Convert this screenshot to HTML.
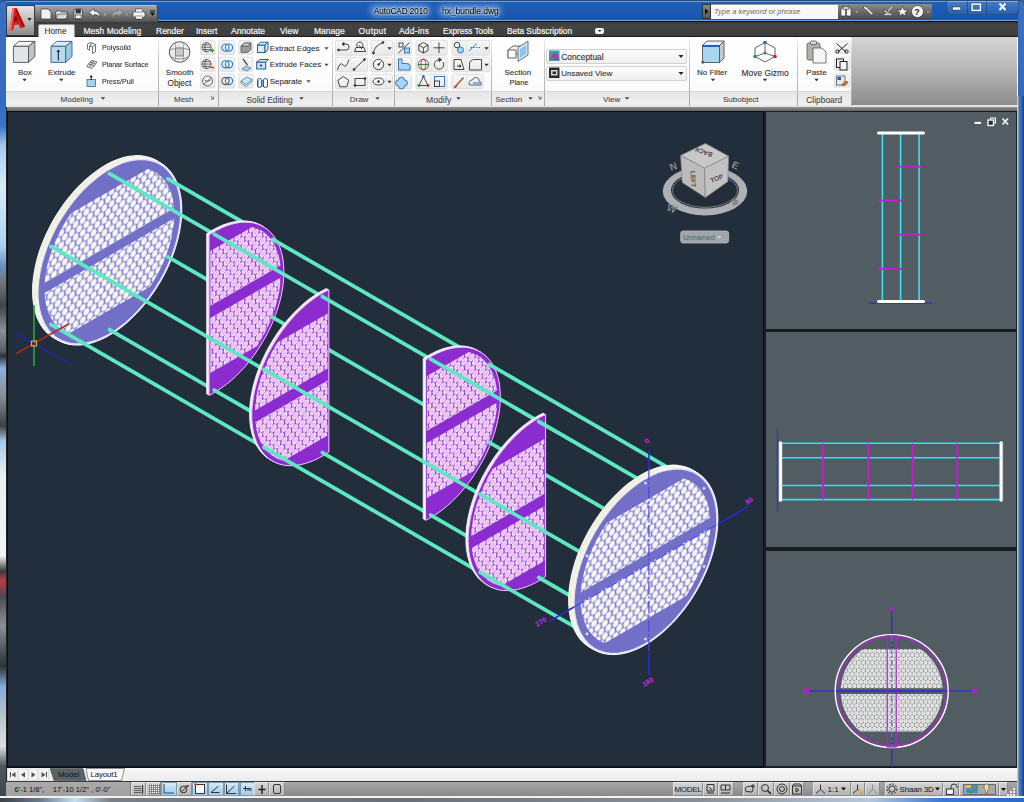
<!DOCTYPE html><html><head><meta charset="utf-8"><style>*{margin:0;padding:0;box-sizing:border-box}
html,body{width:1024px;height:802px;overflow:hidden;background:#2a5aa8;font-family:"Liberation Sans",sans-serif}
.a{position:absolute}
#frame{left:0;top:0;width:1024px;height:802px;background:linear-gradient(180deg,#2a4a78 0px,#2a4a78 1px,#3a6ec0 2px,#2c64b8 30%,#2a5fae 100%);border-radius:6px 6px 0 0}
#titlebar{left:6px;top:1px;width:1012px;height:21px;background:linear-gradient(180deg,#6aa0e0 0px,#6aa0e0 1px,#1e60b8 1px,#1a5ab2 10px,#1856aa 19.5px,#6aa8e8 19.5px,#6aa8e8 20.5px,#0a0a0a 20.5px)}
#tabbar{left:6px;top:22px;width:1012px;height:15px;background:linear-gradient(180deg,#3a3a3a 0%,#444444 30%,#3c3c3c 100%);border-bottom:1px solid #1a1a1a}
#ribbon{left:6px;top:37px;width:1012px;height:69px;background:linear-gradient(180deg,#ffffff 0%,#fcfcfc 60%,#f6f6f6 100%)}
#ribbonshadow{left:6px;top:106px;width:1012px;height:6px;background:linear-gradient(180deg,#a0a0a0 0%,#7a7a7a 50%,#5a5a5a 100%)}
#vpmain{left:7px;top:111px;width:757px;height:657px;background:#232e3c;border:1px solid #0c0f14;border-width:1px 1px 2px 1px}
#vpr1{left:764px;top:111px;width:253px;height:221px;background:#515d62;border:1px solid #1a1e22;border-width:1px 1px 3px 2px}
#vpr2{left:764px;top:329px;width:253px;height:221px;background:#515d62;border:1px solid #1a1e22;border-width:3px 1px 3px 2px}
#vpr3{left:764px;top:548px;width:253px;height:220px;background:#515d62;border:1px solid #1a1e22;border-width:3px 1px 2px 2px}
#layoutrow{left:6px;top:768px;width:1012px;height:13px;background:linear-gradient(180deg,#ffffff 0%,#f6f6f6 15%,#ececec 100%)}
#statusbar{left:6px;top:781px;width:1012px;height:16px;background:linear-gradient(180deg,#a9a9a9 0%,#979797 50%,#878787 100%);border-top:1px solid #3a3a3a}
#bottomframe{left:0;top:796px;width:1024px;height:6px;background:linear-gradient(180deg,#f2f2f2 0px,#f2f2f2 1.5px,transparent 1.5px),linear-gradient(90deg,#3a4048 0px,#6a7a90 40px,#c8e0f4 75px,#7a8088 110px,#6a7078 400px,#8a9098 700px,#b8c8dc 870px,#3a7ad4 940px,#2a6ac8 1024px)}
#leftframe{left:0;top:96px;width:7px;height:706px;background:linear-gradient(180deg,#2f6ac0 0px,#3a74c8 30px,#a8c8ec 50px,#d8ecf8 90px,#b0d0f0 150px,#6a90c0 170px,#707880 185px,#40464c 210px,#8a9098 235px,#5a6068 255px,#2a3038 260px,#90b0d8 272px,#8a9098 300px,#3a4048 330px,#a8c8e8 345px,#e8f0f4 380px,#f0f4f4 460px,#3a3a40 475px,#c03a44 485px,#4a4a50 500px,#8a9098 530px,#2a3038 570px,#88a8d8 590px,#b8c4cc 620px,#d8e0e4 650px,#505860 670px,#3a4048 706px);border-right:1px solid #222}
#rightframe{left:1017px;top:96px;width:7px;height:706px;background:linear-gradient(90deg,#d8e4f0 0%,#4a7ac0 30%,#2f62b0 70%,#1a3a70 100%)}
.tab{top:26.2px;font-size:8.5px;color:#f4f4f4;white-space:nowrap;-webkit-text-stroke:0.2px #f4f4f4}
.rt{font-size:8px;color:#303030;white-space:nowrap;position:absolute;-webkit-text-stroke:0.1px #303030}
.pt{font-size:8px;color:#444;white-space:nowrap;position:absolute;top:94.5px;-webkit-text-stroke:0.08px #444}
.sep{position:absolute;top:38px;width:1px;height:68px;background:linear-gradient(180deg,#f0f0f0 0%,#c8c8c8 30%,#a8a8a8 100%)}
.sb{position:absolute;top:782px;height:14px;background:linear-gradient(180deg,#d4d4d4 0%,#c4c4c4 50%,#b4b4b4 100%);border:1px solid #8a8a8a;border-top-color:#e8e8e8;border-left-color:#e0e0e0}
.sba{position:absolute;top:782px;height:14px;background:linear-gradient(180deg,#d8ecf8 0%,#b8d8ee 50%,#a4cce8 100%);border:1px solid #7a9ab0}
.st{position:absolute;font-size:8px;color:#111;white-space:nowrap}
</style></head><body>
<div id="frame" class="a"></div>
<div id="titlebar" class="a"></div>
<div id="tabbar" class="a"></div>
<div id="ribbon" class="a"></div>
<div id="ribbonshadow" class="a"></div>
<div id="vpmain" class="a"></div>
<div id="vpr1" class="a"></div>
<div id="vpr2" class="a"></div>
<div id="vpr3" class="a"></div>
<div id="layoutrow" class="a"></div>
<div id="statusbar" class="a"></div>
<div id="leftframe" class="a"></div>
<div id="rightframe" class="a"></div>
<div id="bottomframe" class="a"></div>
<div class="a" style="left:6px;top:5px;width:29px;height:31px;background:linear-gradient(180deg,#e4e4e4 0%,#b8b8b8 55%,#8a8a8a 100%);border:1px solid #3a3a3a;border-radius:2px"></div>
<svg class="a" style="left:0;top:0" width="40" height="40" viewBox="0 0 40 40">
<polygon points="12.5,8 16.5,8 25,26.5 20.5,28.5 18.5,24.5 14.5,25 13,30 9.5,30.5" fill="#d81c1c"/>
<polygon points="12.5,8 14.5,8 11.5,29.5 9.5,30.5" fill="#f47070"/>
<polygon points="16.5,8 25,26.5 23,27.5 15.5,11" fill="#a01010"/>
<polygon points="14.5,17 16.5,15.5 18,21 14,21.5" fill="#8a0c0c"/>
<polygon points="27.5,18 31.5,18 29.5,21" fill="#1a1a1a"/>
</svg>
<div class="a" style="left:35px;top:5px;width:123px;height:17px;background:linear-gradient(180deg,#a4a4a4 0%,#8a8a8a 35%,#6a6a6a 70%,#505050 100%);border-radius:0 3px 0 0;border-top:1px solid #c0c0c0;border-right:1px solid #444"></div>
<svg class="a" style="left:35px;top:5px" width="123" height="17" viewBox="35 5 123 17">
<g fill="#f0f0f0" stroke="#222" stroke-width="0.6">
<polygon points="41,9 48,9 51,12 51,19 41,19"/>
<polygon points="56,11 60,11 61,12 67,12 67,19 56,19"/>
<polygon points="58,14 68,14 66,19 56,19" fill="#d8d8d8"/>
<rect x="74" y="9" width="8.5" height="10" rx="1" fill="#d8d8d8"/>
<rect x="76" y="9.5" width="4.5" height="3.5" fill="#333"/>
<rect x="75.5" y="15" width="5.5" height="3.5" fill="#fff"/>
</g>
<path d="M89,12.5 L94,8.5 L94,11 Q100,11 100,17.5 Q98,14 94,14.5 L94,16.5 Z" fill="#f4f4f4" stroke="#222" stroke-width="0.6"/>
<circle cx="105" cy="14.5" r="0.9" fill="#bbb"/>
<path d="M123,12.5 L118,8.5 L118,11 Q112,11 112,17.5 Q114,14 118,14.5 L118,16.5 Z" fill="#a8a8a8" stroke="#666" stroke-width="0.5"/>
<circle cx="127" cy="14.5" r="0.9" fill="#aaa"/>
<rect x="133" y="11.5" width="12" height="6" rx="2" fill="#f4f4f4" stroke="#222" stroke-width="0.6"/>
<rect x="135.5" y="9" width="7" height="3" fill="#f4f4f4" stroke="#222" stroke-width="0.5"/>
<rect x="135.5" y="16" width="7" height="3" fill="#fff" stroke="#222" stroke-width="0.5"/>
<polygon points="150,12.5 155,12.5 152.5,16" fill="#111"/>
<rect x="150" y="10.5" width="5" height="1" fill="#111"/>
</svg>
<div class="a" style="left:370px;top:6px;width:60px;height:10px;background:rgba(190,220,255,0.55);filter:blur(3px);border-radius:5px"></div><div class="a" style="left:439px;top:6px;width:62px;height:10px;background:rgba(190,220,255,0.55);filter:blur(3px);border-radius:5px"></div>
<div class="a" style="left:373.5px;top:6.1px;font-size:8.6px;color:#000;white-space:nowrap;transform:scaleX(0.935);transform-origin:0 0;-webkit-text-stroke:0.15px #000;text-shadow:0 0 1px #fff,0 0 2px #e8f4ff,0 0 3px #d8ecff">AutoCAD 2010</div>
<div class="a" style="left:442px;top:6.1px;font-size:8.6px;color:#000;white-space:nowrap;transform:scaleX(0.98);transform-origin:0 0;-webkit-text-stroke:0.15px #000;text-shadow:0 0 1px #fff,0 0 2px #e8f4ff,0 0 3px #d8ecff">hx_bundle.dwg</div>
<div class="a" style="left:702px;top:4px;width:9px;height:15px;background:linear-gradient(180deg,#888 0%,#555 100%);border:1px solid #333"></div>
<svg class="a" style="left:702px;top:4px" width="9" height="15"><polygon points="3,4.5 6.5,7.5 3,10.5" fill="#111"/></svg>
<div class="a" style="left:711px;top:4px;width:127px;height:15px;background:#f8f8f8;border-top:1px solid #999"></div>
<div class="a" style="left:714px;top:7px;font-size:7.5px;font-style:italic;color:#6a6a6a;white-space:nowrap">Type a keyword or phrase</div>
<div class="a" style="left:838px;top:4px;width:94px;height:15px;background:linear-gradient(180deg,#8c8c8c 0%,#6a6a6a 50%,#4c4c4c 100%);border-radius:0 0 3px 0"></div>
<svg class="a" style="left:838px;top:4px" width="94" height="15" viewBox="838 4 94 15">
<g fill="#f4f4f4" stroke="#222" stroke-width="0.5">
<rect x="841" y="8" width="4.5" height="8" rx="1.5"/><rect x="846.5" y="8" width="4.5" height="8" rx="1.5"/>
<rect x="843" y="6.5" width="6" height="3" fill="#ccc"/>
</g>
<circle cx="857" cy="12" r="0.8" fill="#ccc"/>
<path d="M863,7 Q866,5.5 867.5,8 L873,13.5 L871.5,15 L866,9.5 Q863.5,10.5 862.5,8 L864.5,8.5 Z" fill="#f4f4f4" stroke="#222" stroke-width="0.5"/>
<path d="M883,15.5 L893,15.5 L888,11 Z M884,9 Q884,14.5 890,14 Z" fill="#f4f4f4" stroke="#222" stroke-width="0.5"/>
<line x1="888" y1="11" x2="892" y2="7" stroke="#f4f4f4" stroke-width="1"/>
<polygon points="902.5,6 904,10 908,10 905,12.5 906,16 902.5,14 899,16 900,12.5 897,10 901,10" fill="#f4f4f4" stroke="#222" stroke-width="0.5"/>
<circle cx="917.5" cy="11.5" r="6" fill="#f4f4f4" stroke="#222" stroke-width="0.6"/>
<text x="914.3" y="15" font-family="Liberation Sans" font-weight="bold" font-size="9" fill="#222">?</text>
<circle cx="928" cy="12" r="0.8" fill="#ccc"/>
</svg>
<div class="a" style="left:946px;top:1px;width:73px;height:14px;border:1px solid rgba(20,40,80,0.5);border-top:none;border-radius:0 0 4px 4px;background:linear-gradient(180deg,rgba(255,255,255,0.18) 0%,rgba(255,255,255,0.05) 100%)"></div>
<div class="a" style="left:967px;top:1px;width:1px;height:13px;background:rgba(20,40,80,0.4)"></div>
<div class="a" style="left:986px;top:1px;width:1px;height:13px;background:rgba(20,40,80,0.4)"></div>
<svg class="a" style="left:946px;top:0" width="73" height="16" viewBox="946 0 73 16">
<rect x="952.5" y="7" width="8" height="3" fill="#fff" stroke="#333" stroke-width="0.5"/>
<rect x="972" y="4" width="8.5" height="6.5" fill="none" stroke="#fff" stroke-width="1.6"/>
<rect x="971" y="3" width="10.5" height="8.5" fill="none" stroke="#333" stroke-width="0.4"/>
<g stroke="#fff" stroke-width="1.9"><line x1="999.5" y1="3.5" x2="1005.5" y2="10"/><line x1="1005.5" y1="3.5" x2="999.5" y2="10"/></g>
</svg>
<div class="a" style="left:38px;top:24px;width:37px;height:13px;background:linear-gradient(180deg,#f0f0f0 0%,#fafafa 100%);border:1px solid #999;border-bottom:none;border-radius:2px 2px 0 0"></div>
<div class="a" style="left:44.5px;top:26.2px;font-size:8.3px;color:#2a2a2a;white-space:nowrap">Home</div>
<div class="a tab" style="left:83.5px">Mesh Modeling</div>
<div class="a tab" style="left:156px">Render</div>
<div class="a tab" style="left:196px">Insert</div>
<div class="a tab" style="left:231px">Annotate</div>
<div class="a tab" style="left:280px">View</div>
<div class="a tab" style="left:314px">Manage</div>
<div class="a tab" style="left:358.5px;letter-spacing:0.4px">Output</div>
<div class="a tab" style="left:399px;letter-spacing:0.2px">Add-ins</div>
<div class="a tab" style="left:443px;font-size:8.15px;top:26.5px">Express Tools</div>
<div class="a tab" style="left:507px;font-size:8.3px;top:26.3px">Beta Subscription</div>
<div class="a" style="left:594.5px;top:28px;width:9.5px;height:5.5px;background:#f4f4f4;border-radius:2px"></div>
<svg class="a" style="left:594.5px;top:28px" width="10" height="6"><polygon points="3,2 6.5,2 4.75,4" fill="#222"/></svg>
<div class="a" style="left:6px;top:91px;width:845px;height:15px;background:linear-gradient(180deg,#e6e6e6 0%,#ececec 50%,#f2f2f2 100%);border-top:1px solid #d8d8d8"></div>
<div class="a" style="left:851px;top:37px;width:166px;height:68px;background:linear-gradient(180deg,#d4d4d4 0%,#bcbcbc 40%,#8c8c8c 100%);border-left:1px solid #c8c8c8"></div>
<div class="a" style="left:6px;top:105px;width:1012px;height:2px;background:#e6e6e6"></div>
<div class="sep" style="left:158px"></div>
<div class="sep" style="left:217.5px"></div>
<div class="sep" style="left:331.5px"></div>
<div class="sep" style="left:394px"></div>
<div class="sep" style="left:491px"></div>
<div class="sep" style="left:543.5px"></div>
<div class="sep" style="left:688.5px"></div>
<div class="sep" style="left:796.5px"></div>
<div class="sep" style="left:851px"></div>
<!-- Modeling -->
<div class="rt" style="left:18px;top:67.5px">Box</div>
<div class="rt" style="left:48px;top:67.5px">Extrude</div>
<div class="rt" style="left:101.6px;top:43.3px;transform:scaleX(0.9);transform-origin:0 0">Polysolid</div>
<div class="rt" style="left:101.6px;top:60.3px;transform:scaleX(0.88);transform-origin:0 0">Planar Surface</div>
<div class="rt" style="left:101.6px;top:76.8px;transform:scaleX(0.88);transform-origin:0 0">Press/Pull</div>
<div class="pt" style="left:60.6px">Modeling</div>
<!-- Mesh -->
<div class="rt" style="left:165.8px;top:67.8px">Smooth</div>
<div class="rt" style="left:167.6px;top:78.6px;font-size:8.2px">Object</div>
<div class="pt" style="left:174px">Mesh</div>
<!-- Solid editing -->
<div class="rt" style="left:269.7px;top:44px">Extract Edges</div>
<div class="rt" style="left:269.7px;top:60.3px">Extrude Faces</div>
<div class="rt" style="left:269.7px;top:76.8px">Separate</div>
<div class="pt" style="left:246.5px;font-size:8.3px">Solid Editing</div>
<!-- Draw / Modify -->
<div class="pt" style="left:349.7px">Draw</div>
<div class="pt" style="left:426px;font-size:8.6px">Modify</div>
<!-- Section -->
<div class="rt" style="left:504.5px;top:67.5px">Section</div>
<div class="rt" style="left:509.5px;top:78.3px;font-size:7.4px">Plane</div>
<div class="pt" style="left:495.5px">Section</div>
<!-- View -->
<div class="a" style="left:546px;top:48.5px;width:141px;height:15.5px;background:linear-gradient(180deg,#fdfdfd 0%,#eeeeee 100%);border:1px solid #d2d2d2;border-radius:2px"></div>
<div class="a" style="left:546px;top:65.5px;width:141px;height:15.5px;background:linear-gradient(180deg,#fdfdfd 0%,#eeeeee 100%);border:1px solid #d2d2d2;border-radius:2px"></div>
<div class="rt" style="left:561.2px;top:52px;font-size:8.4px">Conceptual</div>
<div class="rt" style="left:561.2px;top:68.8px">Unsaved View</div>
<div class="pt" style="left:603px">View</div>
<!-- Subobject -->
<div class="rt" style="left:697px;top:67.5px">No Filter</div>
<div class="rt" style="left:741.6px;top:67.8px;font-size:8.4px">Move Gizmo</div>
<div class="pt" style="left:723px">Subobject</div>
<!-- Clipboard -->
<div class="rt" style="left:806.3px;top:67.8px">Paste</div>
<div class="pt" style="left:806.3px;font-size:8.4px">Clipboard</div>
<svg class="a" style="left:0;top:0" width="1024" height="110" viewBox="0 0 1024 110">
<defs>
<linearGradient id="btnbg" x1="0" y1="0" x2="0" y2="1"><stop offset="0" stop-color="#f8f8f8"/><stop offset="1" stop-color="#e8e8e8"/></linearGradient>
</defs>
<!-- Box -->
<g stroke="#505050" stroke-width="0.9" stroke-linejoin="round">
<polygon points="13.4,46.3 18.7,41.4 34.9,41.4 28.5,46.3" fill="#f6f6f6"/>
<polygon points="28.5,46.3 34.9,41.4 34.9,56.5 28.5,62.4" fill="#c0c2c4"/>
<rect x="13.4" y="46.3" width="15.1" height="16.1" fill="#e2e4e6"/>
</g>
<polygon points="22.3,78.7 26.7,78.7 24.5,81.2" fill="#333"/>
<!-- Extrude -->
<g stroke="#3e5e7c" stroke-width="0.9" stroke-linejoin="round">
<polygon points="51,46.3 56.8,41.4 72,41.4 65.6,46.3" fill="#d8eefa"/>
<polygon points="65.6,46.3 72,41.4 72,56.5 65.6,62.4" fill="#9ccae6"/>
<rect x="51" y="46.3" width="14.6" height="16.1" fill="#b6dcf2"/>
</g>
<line x1="58.3" y1="60.5" x2="58.3" y2="51" stroke="#111" stroke-width="1"/>
<polygon points="56.5,52 58.3,49.5 60.1,52" fill="#111"/>
<polygon points="59.1,78.7 63.5,78.7 61.3,81.2" fill="#333"/>
<!-- Polysolid / Planar / PressPull -->
<g fill="none" stroke="#555" stroke-width="0.8">
<path d="M87.5,44 L91,42.6 L95.5,44.5 L95.5,52 L92.5,53.6 L92.5,47 L89.5,45.7 L89.5,50.5 L87.5,49 Z"/>
<path d="M91,42.6 L91,47 M92.5,47 L95.5,44.5"/>
<path d="M86.5,66.5 L91.5,60.2 L97,62 L92,68.5 Z" fill="#e8e8e8"/>
<path d="M88.5,64 L94,65.5 M90,62 L95.5,63.8 M89.5,67 L93.5,61"/>
</g>
<rect x="87" y="79.5" width="8.5" height="7" fill="#a8d4ee" stroke="#3e6a8c" stroke-width="0.8"/>
<line x1="91.2" y1="75.8" x2="91.2" y2="80" stroke="#111" stroke-width="1"/>
<circle cx="91.2" cy="76.5" r="1.1" fill="#111"/>
<!-- Smooth object sphere -->
<circle cx="179.6" cy="52" r="10.3" fill="#ececec" stroke="#555" stroke-width="1"/>
<path d="M169.6,50 Q179.6,46 189.6,50 M171,57 Q179.6,61 188.2,57" fill="none" stroke="#777" stroke-width="0.8"/>
<rect x="175.5" y="48" width="8" height="8" fill="#c8c8c8" stroke="#666" stroke-width="0.7"/>
<path d="M175.5,43 L175.5,62 M183.5,43 L183.5,62" stroke="#888" stroke-width="0.6"/>
<!-- small button backgrounds -->
<g fill="url(#btnbg)" stroke="#d6d6d6" stroke-width="0.7">
<rect x="200.5" y="40.6" width="14.5" height="14" rx="1.5"/><rect x="200.5" y="57.3" width="14.5" height="14" rx="1.5"/><rect x="200.5" y="74" width="14.5" height="14" rx="1.5"/>
<rect x="220" y="40.6" width="14.4" height="14" rx="1.5"/><rect x="220" y="57.3" width="14.4" height="14" rx="1.5"/><rect x="220" y="74" width="14.4" height="14" rx="1.5"/>
<rect x="238.7" y="40.6" width="14.3" height="14" rx="1.5"/><rect x="238.7" y="57.3" width="14.3" height="14" rx="1.5"/><rect x="238.7" y="74" width="14.3" height="14" rx="1.5"/>
<rect x="335.5" y="40.3" width="32" height="15" rx="1.5"/><rect x="371" y="40.3" width="21.5" height="15" rx="1.5"/>
<rect x="335.5" y="57.3" width="32" height="14.5" rx="1.5"/><rect x="371" y="57.3" width="21.5" height="14.5" rx="1.5"/>
<rect x="335.5" y="74.5" width="32" height="14.5" rx="1.5"/><rect x="371" y="74.5" width="21.5" height="14.5" rx="1.5"/>
<rect x="396.4" y="40.3" width="15" height="15" rx="1.5"/><rect x="416" y="40.3" width="31.2" height="15" rx="1.5"/><rect x="451.9" y="40.3" width="37.5" height="15" rx="1.5"/>
<rect x="396.4" y="57.3" width="15" height="14.5" rx="1.5"/><rect x="416" y="57.3" width="31.2" height="14.5" rx="1.5"/><rect x="451.9" y="57.3" width="37.5" height="14.5" rx="1.5"/>
<rect x="396.4" y="74.5" width="15" height="14.5" rx="1.5"/><rect x="416" y="74.5" width="31.2" height="14.5" rx="1.5"/><rect x="451.9" y="74.5" width="31.2" height="14.5" rx="1.5"/>
<rect x="834.4" y="41.2" width="15.5" height="12.6" rx="1.5"/><rect x="834.4" y="57.3" width="15.5" height="12.8" rx="1.5"/><rect x="834.4" y="74" width="15.5" height="13" rx="1.5"/>
</g>
<g stroke="#e2e2e2" stroke-width="0.7"><line x1="351" y1="41" x2="351" y2="89"/><line x1="386" y1="41" x2="386" y2="89"/><line x1="431" y1="41" x2="431" y2="89"/><line x1="466.7" y1="41" x2="466.7" y2="89"/><line x1="483.1" y1="41" x2="483.1" y2="72"/></g>
<!-- Mesh col icons -->
<g fill="none" stroke="#444" stroke-width="0.8">
<circle cx="206.5" cy="47.2" r="4.6"/><path d="M201.9,47.2 H211.1 M206.5,42.6 Q203,47.2 206.5,51.8 M202.5,44.8 H210.5 M202.5,49.6 H210.5"/>
<circle cx="206.5" cy="64" r="4.6"/><path d="M201.9,64 H211.1 M206.5,59.4 Q203,64 206.5,68.6 M202.5,61.6 H210.5 M202.5,66.4 H210.5"/>
<circle cx="207.5" cy="81" r="5"/><path d="M203.5,85 L211.5,77 M204.5,80 Q207.5,83 210.5,80"/>
</g>
<path d="M210.5,50.5 H214 M212.25,48.7 V52.3" stroke="#1a9a2a" stroke-width="1.4"/>
<path d="M210.5,67.5 H214" stroke="#c02020" stroke-width="1.4"/>
<!-- Solid editing col1 rings -->
<g fill="none" stroke="#2a7ac8" stroke-width="1.1">
<circle cx="225.5" cy="47.6" r="3.6"/><circle cx="229" cy="47.6" r="3.6"/>
<circle cx="225.5" cy="64.3" r="3.6"/><circle cx="229" cy="64.3" r="3.6"/>
<circle cx="225.5" cy="81" r="3.6" stroke="#555"/><circle cx="229" cy="81" r="3.6" stroke="#2a7ac8"/>
</g>
<!-- col2 -->
<g stroke="#444" stroke-width="0.7">
<polygon points="241,46 244.5,43 251,43 251,49.5 247.5,52.5 241,52.5" fill="#9a9a9a"/>
<polygon points="241,46 244.5,43 251,43 247.5,46" fill="#d0d0d0"/>
<path d="M242,69 L246,66 L251,68 L247,71 Z" fill="#a8d0ea" stroke="#3a6a8c"/>
<path d="M243,59 L247.5,65" stroke="#222" stroke-width="1.2"/>
<path d="M241,81 L247,77 L252,79.5 L246,84.5 Z" fill="#cde6f6" stroke="#3a6a8c"/>
<path d="M241,81 L241,83 L246,86.5 L252,81.5 L252,79.5" fill="none" stroke="#3a6a8c"/>
</g>
<!-- Extract edges / extrude faces / separate icons -->
<g stroke="#2060a8" stroke-width="1" fill="#dcecf8">
<rect x="257.5" y="45" width="7.5" height="7.5"/><path d="M257.5,45 L260.5,42.2 L268,42.2 L265,45 Z M265,45 L268,42.2 L268,49.8 L265,52.5 Z"/>
<rect x="256.7" y="62" width="9" height="7" fill="#c8e0f2"/><path d="M256.7,62 L259.5,59.5 L268.5,59.5 L265.7,62 Z"/>
<path d="M258,80 V87 M262,80 V87 M263.5,80 V87 M267.5,80 V87" fill="none"/>
<rect x="257.5" y="78.5" width="4" height="9" rx="1.8" fill="none"/><rect x="263.5" y="78.5" width="4" height="9" rx="1.8" fill="none"/>
</g>
<circle cx="261" cy="65.5" r="0.9" fill="#111"/>
<g fill="#555"><polygon points="324.3,47.2 328.7,47.2 326.5,49.7"/><polygon points="324.3,63.7 328.7,63.7 326.5,66.2"/><polygon points="306.3,80.2 310.7,80.2 308.5,82.7"/></g>
<!-- Draw icons -->
<g fill="none" stroke="#333" stroke-width="0.9">
<path d="M338.5,50 H346 Q349,50 349,47 Q349,44 346,44 H344"/><polygon points="344,42.5 342,44 344,45.5" fill="#333"/><circle cx="338.5" cy="50" r="0.9" fill="#333"/>
<path d="M354.5,51.5 L365.5,51.5 L364,47.5 L356,47.5 Z M357.5,47.5 Q355,42.5 360,42 Q364,42.5 362.5,47.5 M359,45 L362,49"/>
<path d="M373.5,53 Q374,46 383,42.5"/><circle cx="373.5" cy="53" r="0.9" fill="#333"/><circle cx="383" cy="42.5" r="0.9" fill="#333"/>
<path d="M337.5,70 Q340,61 343,65 Q346,69 349,59.5"/>
<path d="M354,69.5 L364.5,59.5"/><circle cx="354" cy="69.5" r="0.9" fill="#333"/><circle cx="364.5" cy="59.5" r="0.9" fill="#333"/>
<circle cx="378.5" cy="64.5" r="5.2"/><path d="M378.5,64.5 L381.5,61.5"/><circle cx="378.5" cy="64.5" r="0.8" fill="#333"/>
<polygon points="343.3,76.5 348.8,80.3 346.8,86.8 339.8,86.8 337.8,80.3"/>
<rect x="355" y="78.5" width="10" height="7"/><circle cx="355" cy="85.5" r="0.9" fill="#333"/><circle cx="365" cy="78.5" r="0.9" fill="#333"/>
<ellipse cx="378.5" cy="81.5" rx="5.5" ry="3.5"/><circle cx="378.5" cy="81.5" r="0.9" fill="#333"/>
</g>
<g fill="#333"><polygon points="387.3,47.2 391.7,47.2 389.5,49.7"/><polygon points="387.3,63.7 391.7,63.7 389.5,66.2"/><polygon points="387.3,80.7 391.7,80.7 389.5,83.2"/><polygon points="484.3,47.2 488.7,47.2 486.5,49.7"/><polygon points="484.3,63.7 488.7,63.7 486.5,66.2"/></g>
<!-- Modify icons -->
<g fill="none" stroke="#333" stroke-width="0.9">
<path d="M398.5,53 L409.5,42.5"/><rect x="399" y="43" width="4" height="4"/><rect x="404.5" y="48" width="5" height="5" fill="#a8d4f0" stroke="#2a6ab0"/>
<polygon points="423.4,42.5 428,45 428,50.5 423.4,53 418.8,50.5 418.8,45"/><path d="M418.8,45 L423.4,47.8 L428,45 M423.4,47.8 V53"/>
<path d="M439,42.5 V53 M433.5,47.8 H444.5"/>
<circle cx="457" cy="45" r="2.8"/><circle cx="460.5" cy="50" r="3" stroke="#2a6ab0" fill="#a8d4f0"/>
<path d="M469,51 L477,43.5" stroke="#2a6ab0"/><path d="M470.5,47.5 H481" stroke-dasharray="1.5 1.2" stroke="#2a6ab0"/>
<path d="M398.5,70 H410 V66 Q410,63.5 406.5,63.5 H402 V59 H398.5 Z" fill="#a8d4f0" stroke="#2a6ab0"/>
<circle cx="423.4" cy="64.5" r="5.3" stroke="#555"/><ellipse cx="423.4" cy="64.5" rx="2.5" ry="5.3" stroke="#c02828"/><path d="M418,64.5 H428.8" stroke="#2a7a2a"/>
<path d="M443,62 A4.7,4.7 0 1 1 439,59.8"/><polygon points="439,58 441.5,59.8 439,61.5" fill="#333"/>
<path d="M454,59.5 H461 L464,69.5 H454 Z"/><path d="M457,66 H461 M459.5,64.5 L461,66 L459.5,67.5" stroke="#111"/>
<path d="M469.5,70 V64 Q469.5,59.5 475,59.5 H481.5 V70 Z"/>
<path d="M398.5,80 A3,3 0 1 1 404.5,80 A3,3 0 1 1 404.5,86 A3,3 0 1 1 398.5,86 A3,3 0 1 1 398.5,80" stroke="#2a6ab0" fill="#a8d4f0"/>
<path d="M423.4,76.5 L419,85.5 H428 Z"/><circle cx="419" cy="85.5" r="1.1" fill="#2a8a2a" stroke="#2a8a2a"/><circle cx="428" cy="85.5" r="1.1" fill="#c02828" stroke="#c02828"/><circle cx="423.4" cy="76.5" r="1" fill="#2a6ab0" stroke="#2a6ab0"/>
<rect x="434.5" y="76.5" width="10" height="10" stroke="#2a6ab0"/><rect x="434.5" y="81" width="5" height="5.5"/>
<path d="M455,87 L463.5,77.5" stroke="#a06030" stroke-width="1.6"/><path d="M454,87.5 L457,86" stroke="#c04020" stroke-width="1.5"/>
<path d="M469.5,85 Q468,80 472.5,80 Q473,77 476.5,77.5 Q479.5,78 479,81 Q482,81.5 481,85 Z" stroke="#2a5a90"/><path d="M473,83 H480" stroke="#2a5a90"/>
</g>
<!-- Section plane icon -->
<g stroke="#444" stroke-width="0.8">
<path d="M508,50 L513,46 L521,46 L521,54 L513,54 L508,58 Z" fill="#f0f0f0"/>
<path d="M508,50 L516,50 L516,58 L508,58 Z" fill="#fafafa"/>
<polygon points="518,47.5 528,41 528,55 518,61.5" fill="#cfe6f6" stroke="#3a5a7a"/>
<polygon points="520,49 526,45 526,54 520,58" fill="#8cc4ea" stroke="none"/>
</g>
<g fill="#444"><polygon points="528.3,97.2 532.7,97.2 530.5,99.7"/><polygon points="375.3,97.2 379.7,97.2 377.5,99.7"/><polygon points="456.3,97.2 460.7,97.2 458.5,99.7"/><polygon points="299.3,97.2 303.7,97.2 301.5,99.7"/><polygon points="100.8,97.2 105.2,97.2 103.0,99.7"/><polygon points="624.8,97.2 629.2,97.2 627.0,99.7"/></g>
<path d="M538,96 L541,99 M541,96.5 V99 H538.5" stroke="#555" stroke-width="0.8" fill="none"/>
<path d="M210.5,96 L213.5,99 M213.5,96.5 V99 H211" stroke="#555" stroke-width="0.8" fill="none"/>
<!-- View dropdown icons -->
<rect x="549" y="50.5" width="10.5" height="10.5" fill="#3a9ab8"/>
<polygon points="550,60 554,52 556,56" fill="#c83a4a"/><polygon points="553,60 557,52 559.5,60" fill="#8a4ab8"/>
<rect x="549" y="67.5" width="10.5" height="10.5" fill="#2a2a2a"/><rect x="551" y="70" width="6.5" height="5.5" fill="#d8d8d8"/><rect x="552.5" y="71.5" width="3.5" height="2.5" fill="#2a2a2a"/>
<g fill="#222"><polygon points="678.5,55 683.5,55 681,58"/><polygon points="678.5,72 683.5,72 681,75"/></g>
<!-- No filter -->
<g stroke="#555" stroke-width="0.9">
<polygon points="702.5,45.5 707,41 724,41 719.5,45.5" fill="#e6f2fa"/>
<polygon points="719.5,45.5 724,41 724,58 719.5,62.5" fill="#c6c8ca"/>
<rect x="702.5" y="45.5" width="17" height="17" fill="#a8d6f0"/>
</g>
<rect x="702.5" y="45" width="17" height="2" fill="#2060b8"/><rect x="701.5" y="61" width="2.5" height="2.5" fill="#2060b8"/>
<polygon points="710.8,78.7 715.2,78.7 713.0,81.2" fill="#333"/>
<!-- Move gizmo -->
<g fill="none" stroke="#555" stroke-width="0.9">
<polygon points="765,42.5 775,48 775,56.5 765,62 755,56.5 755,48"/>
<path d="M765,53 V42.5 M765,53 L755,56.5 M765,53 L775,56.5"/>
</g>
<circle cx="765" cy="42.5" r="1.8" fill="#2a6ac0"/><circle cx="755" cy="56.5" r="1.8" fill="#2a9a3a"/><circle cx="775" cy="56.5" r="1.8" fill="#c02828"/><circle cx="765" cy="53" r="1.4" fill="#666"/>
<polygon points="762.8,78.7 767.2,78.7 765.0,81.2" fill="#333"/>
<!-- Paste -->
<g stroke="#555" stroke-width="0.8">
<rect x="807" y="43" width="13" height="17" rx="1.5" fill="#b4b0aa"/>
<rect x="810.5" y="41" width="6" height="3.5" rx="1" fill="#d8d8d8"/>
<path d="M813,48 H822 L826,52 V63 H813 Z" fill="#f6f6f6"/>
</g>
<polygon points="814.3,78.7 818.7,78.7 816.5,81.2" fill="#333"/>
<!-- cut/copy/match -->
<g stroke="#222" stroke-width="1" fill="none">
<path d="M836.5,43.5 L846,52 M847.5,43.5 L838,52"/><circle cx="837.5" cy="51.5" r="1.6"/><circle cx="846.5" cy="51.5" r="1.6"/>
<rect x="836.5" y="59" width="7" height="8.5" fill="#f4f4f4"/><rect x="840" y="61.5" width="7" height="8.5" fill="#f4f4f4"/>
</g>
<rect x="836.5" y="76" width="8.5" height="9" fill="#e8e8f0" stroke="#444" stroke-width="0.7"/><rect x="837.5" y="77" width="3.5" height="3" fill="#2a5aa8"/>
<path d="M842,84.5 Q845,80 848,82 Q847,85.5 842,85.5 Z" fill="#d88020" stroke="#803010" stroke-width="0.6"/>
</svg>
<!-- layout tabs -->
<svg class="a" style="left:0;top:766px" width="260" height="16" viewBox="0 766 260 16">
<g fill="#f4f4f4" stroke="#d0d0d0" stroke-width="0.6">
<rect x="7.5" y="769" width="10" height="11"/><rect x="18" y="769" width="10" height="11"/><rect x="28.5" y="769" width="9.5" height="11"/><rect x="38.5" y="769" width="10" height="11"/>
</g>
<g fill="#505050">
<rect x="10" y="772" width="1" height="5.5"/><polygon points="15.5,772 15.5,777.5 11.5,774.75"/>
<polygon points="25,772 25,777.5 21,774.75"/>
<polygon points="31.5,772 31.5,777.5 35.5,774.75"/>
<polygon points="41.5,772 41.5,777.5 45.5,774.75"/><rect x="46" y="772" width="1" height="5.5"/>
</g>
<polygon points="50,768.5 83,768.5 86,780.5 54,780.5" fill="#5a6266" stroke="#40484c" stroke-width="0.6"/>
<polygon points="86,768.5 124.5,768.5 121.5,780.5 88.5,780.5" fill="#fafafa" stroke="#606060" stroke-width="0.7"/>
</svg>
<div class="st" style="left:58px;top:769.5px;color:#101418;font-size:7.8px">Model</div>
<div class="st" style="left:90.5px;top:769.5px;font-size:7.8px;letter-spacing:-0.1px">Layout1</div>
<!-- status bar sections -->
<div class="a" style="left:6px;top:782px;width:125px;height:14px;background:linear-gradient(180deg,#aaaaaa 0%,#a0a0a0 100%);border-right:1px solid #7a7a7a"></div>
<div class="st" style="left:14.5px;top:784.5px;font-size:7.6px;color:#111">6'-1 1/8",&nbsp;&nbsp;&nbsp; 17'-10 1/2" , 0'-0"</div>
<div class="sb" style="left:131.4px;width:15px"></div>
<div class="sb" style="left:146.4px;width:15px"></div>
<div class="sba" style="left:161.3px;width:15.8px"></div>
<div class="sb" style="left:177.1px;width:15px"></div>
<div class="sba" style="left:192px;width:15.9px"></div>
<div class="sba" style="left:207.9px;width:15.8px"></div>
<div class="sba" style="left:223.7px;width:15.8px"></div>
<div class="sba" style="left:239.5px;width:15px"></div>
<div class="sb" style="left:254.4px;width:15px"></div>
<div class="sb" style="left:269.4px;width:15.8px"></div>
<div class="sb" style="left:673.2px;width:29.8px"></div>
<div class="st" style="left:674.5px;top:784.5px;font-size:8px;letter-spacing:-0.3px;color:#1a1a1a">MODEL</div>
<div class="sb" style="left:703px;width:15px"></div>
<div class="sb" style="left:718px;width:15.8px"></div>
<div class="sb" style="left:742.6px;width:15.8px"></div>
<div class="sb" style="left:758.4px;width:15.8px"></div>
<div class="sb" style="left:774.2px;width:15.8px"></div>
<div class="sb" style="left:790px;width:14px"></div>
<div class="sb" style="left:813px;width:37.8px"></div>
<div class="st" style="left:827.5px;top:784.5px;font-size:8px">1:1</div>
<div class="sb" style="left:850.8px;width:14.4px"></div>
<div class="sb" style="left:865.2px;width:15.2px"></div>
<div class="sb" style="left:885px;width:58.3px"></div>
<div class="st" style="left:899.5px;top:784.5px;font-size:8px;letter-spacing:-0.2px">Shaan 3D</div>
<div class="sb" style="left:943.3px;width:15.3px"></div>
<div class="sb" style="left:958.6px;width:40.4px"></div>
<div class="a" style="left:962.5px;top:783.5px;width:33px;height:11px;background:#a8a8a8;border:1px solid #6a6a6a"></div>
<div class="sb" style="left:999px;width:9px"></div>
<svg class="a" style="left:0;top:778px" width="1024" height="24" viewBox="0 778 1024 24">
<g stroke="#333" stroke-width="0.7" fill="none">
<path d="M134,786.5 H141 M134,788.5 H141 M134,790.5 H141 M134,792.5 H141"/>
<path d="M142.5,785 V794" stroke-width="1.2"/>
</g>
<rect x="148.5" y="784" width="11" height="10" fill="#f8f8f8"/>
<g stroke="#505050" stroke-width="0.6">
<path d="M148.5,785.5 H159.5 M148.5,787.5 H159.5 M148.5,789.5 H159.5 M148.5,791.5 H159.5 M148.5,793.5 H159.5"/>
<path d="M149.5,784 V794 M151.5,784 V794 M153.5,784 V794 M155.5,784 V794 M157.5,784 V794 M159.5,784 V794"/>
</g>
<path d="M164,784 V793 H174" stroke="#1a4a7a" stroke-width="1" fill="none"/>
<g stroke="#222" stroke-width="0.9" fill="none">
<circle cx="183.5" cy="789.5" r="3.3"/><path d="M181.5,791.5 L188.5,785.5 M185,786 H189"/>
<rect x="195.5" y="784.5" width="9" height="9" fill="#f8f8f8"/><circle cx="195.5" cy="784.5" r="1.3" fill="#d04040" stroke="none"/>
<path d="M211,792.5 H219.5 M211,792.5 L218.5,786"/>
<path d="M226.5,784.5 V793.5 H236 M226.5,793.5 L234.5,786"/>
<path d="M243,788.5 H251 M245.5,786 V791 M247,790 H252"/>
<path d="M258.5,789.5 H265.5 M262,785 V794" stroke-width="1.4"/>
<rect x="273.5" y="784.5" width="7" height="9" rx="1.5"/>
<path d="M707,793 H714 M707,784.5 H714 V791 H707 Z M709,787 L712,790"/>
<path d="M721,785 H730 V790 H721 Z M725.5,785 V790 M721,793 H730"/>
<path d="M746,791.5 Q744,787 748,786.5 L752,786 Q754.5,788 752,792 Z M753,784 V788 M751,786 H755"/>
<circle cx="765" cy="788" r="3.5"/><path d="M767.5,790.5 L771,794" stroke-width="1.5"/>
<circle cx="782" cy="789" r="5"/><circle cx="782" cy="789" r="2.5"/>
<rect x="792.5" y="786" width="9" height="8"/><path d="M792.5,786 L794,784 H800 L801.5,786 M796,788 L799,790 L796,792 Z"/>
<path d="M820.5,784.5 V789.5 L816,793.5 M820.5,789.5 L825,793.5"/>
<path d="M857.5,784.5 V789.5 L853,793.5 M857.5,789.5 L862,793.5"/>
<path d="M872.5,784.5 V789.5 L868,793.5 M872.5,789.5 L877,793.5" stroke="#888"/>
<circle cx="892" cy="789" r="3.2"/><circle cx="892" cy="789" r="5" stroke-dasharray="2 1.3"/>
<rect x="946.5" y="789" width="7" height="5.5" fill="#f4f4f4"/><path d="M951,789 V786.5 Q951,784 954,784 Q957,784 957,786.5 V788"/>
</g>
<circle cx="860.5" cy="791" r="2" fill="#e8c020"/>
<g fill="#111"><polygon points="841,787.5 846,787.5 843.5,790.5"/><polygon points="935,787.5 940,787.5 937.5,790.5"/><polygon points="1001,788 1006,788 1003.5,791"/></g>
<rect x="966" y="785" width="12" height="8" fill="#4a8ac8"/><path d="M968,791 L971,793 L977,787" stroke="#3aa040" stroke-width="1.6" fill="none"/><rect x="966" y="785" width="5" height="3" fill="#e8c030"/>
<path d="M984,786.5 Q984,784 986.5,784 Q989,784 989,786.5 Q989,789 987.5,790.5 V793 H985.5 V790.5 Q984,789 984,786.5 Z" fill="#f0e0a0" stroke="#555" stroke-width="0.6"/>
<g fill="#f0f0f0"><rect x="1013" y="788" width="2" height="2"/><rect x="1010" y="791" width="2" height="2"/><rect x="1013" y="791" width="2" height="2"/><rect x="1007" y="794" width="2" height="2"/><rect x="1010" y="794" width="2" height="2"/><rect x="1013" y="794" width="2" height="2"/></g>
</svg>
<svg class="a" style="left:0;top:0" width="1024" height="802" viewBox="0 0 1024 802">
<defs>
<clipPath id="vpclip"><rect x="8" y="112" width="755" height="654"/></clipPath>
<pattern id="holesD" patternUnits="userSpaceOnUse" width="7.200" height="12.470" patternTransform="skewY(-30)"><rect x="-1" y="-1" width="9.200" height="14.470" fill="#7470c8"/><g fill="#f6f6ea" stroke="#d4d0f8" stroke-width="0.8"><polygon points="2.02,-2.33 2.55,-1.50 2.82,-0.52 2.82,0.52 2.55,1.50 2.02,2.33 1.30,2.94 0.45,3.26 -0.45,3.26 -1.30,2.94 -2.02,2.33 -2.55,1.50 -2.82,0.52 -2.82,-0.52 -2.55,-1.50 -2.02,-2.33 -1.30,-2.94 -0.45,-3.26 0.45,-3.26 1.30,-2.94"/><polygon points="9.22,-2.33 9.75,-1.50 10.02,-0.52 10.02,0.52 9.75,1.50 9.22,2.33 8.50,2.94 7.65,3.26 6.75,3.26 5.90,2.94 5.18,2.33 4.65,1.50 4.38,0.52 4.38,-0.52 4.65,-1.50 5.18,-2.33 5.90,-2.94 6.75,-3.26 7.65,-3.26 8.50,-2.94"/><polygon points="2.02,10.14 2.55,10.97 2.82,11.95 2.82,12.99 2.55,13.97 2.02,14.80 1.30,15.41 0.45,15.73 -0.45,15.73 -1.30,15.41 -2.02,14.80 -2.55,13.97 -2.82,12.99 -2.82,11.95 -2.55,10.97 -2.02,10.14 -1.30,9.53 -0.45,9.21 0.45,9.21 1.30,9.53"/><polygon points="9.22,10.14 9.75,10.97 10.02,11.95 10.02,12.99 9.75,13.97 9.22,14.80 8.50,15.41 7.65,15.73 6.75,15.73 5.90,15.41 5.18,14.80 4.65,13.97 4.38,12.99 4.38,11.95 4.65,10.97 5.18,10.14 5.90,9.53 6.75,9.21 7.65,9.21 8.50,9.53"/><polygon points="5.62,3.90 6.15,4.74 6.42,5.72 6.42,6.75 6.15,7.73 5.62,8.57 4.90,9.18 4.05,9.49 3.15,9.49 2.30,9.18 1.58,8.57 1.05,7.73 0.78,6.75 0.78,5.72 1.05,4.74 1.58,3.90 2.30,3.29 3.15,2.98 4.05,2.98 4.90,3.29"/></g></pattern><pattern id="holesB" patternUnits="userSpaceOnUse" width="7.200" height="12.470" patternTransform="skewY(-30)"><rect x="-1" y="-1" width="9.200" height="14.470" fill="#8434cc"/><g fill="#f2b8f2" stroke="#fff4ff" stroke-width="1.0"><polygon points="1.87,-2.16 2.35,-1.38 2.61,-0.48 2.61,0.48 2.35,1.38 1.87,2.16 1.20,2.72 0.41,3.01 -0.41,3.01 -1.20,2.72 -1.87,2.16 -2.35,1.38 -2.61,0.48 -2.61,-0.48 -2.35,-1.38 -1.87,-2.16 -1.20,-2.72 -0.41,-3.01 0.41,-3.01 1.20,-2.72"/><polygon points="9.07,-2.16 9.55,-1.38 9.81,-0.48 9.81,0.48 9.55,1.38 9.07,2.16 8.40,2.72 7.61,3.01 6.79,3.01 6.00,2.72 5.33,2.16 4.85,1.38 4.59,0.48 4.59,-0.48 4.85,-1.38 5.33,-2.16 6.00,-2.72 6.79,-3.01 7.61,-3.01 8.40,-2.72"/><polygon points="1.87,10.31 2.35,11.09 2.61,11.99 2.61,12.95 2.35,13.86 1.87,14.63 1.20,15.19 0.41,15.48 -0.41,15.48 -1.20,15.19 -1.87,14.63 -2.35,13.86 -2.61,12.95 -2.61,11.99 -2.35,11.09 -1.87,10.31 -1.20,9.75 -0.41,9.46 0.41,9.46 1.20,9.75"/><polygon points="9.07,10.31 9.55,11.09 9.81,11.99 9.81,12.95 9.55,13.86 9.07,14.63 8.40,15.19 7.61,15.48 6.79,15.48 6.00,15.19 5.33,14.63 4.85,13.86 4.59,12.95 4.59,11.99 4.85,11.09 5.33,10.31 6.00,9.75 6.79,9.46 7.61,9.46 8.40,9.75"/><polygon points="5.47,4.08 5.95,4.85 6.21,5.76 6.21,6.71 5.95,7.62 5.47,8.39 4.80,8.95 4.01,9.25 3.19,9.25 2.40,8.95 1.73,8.39 1.25,7.62 0.99,6.71 0.99,5.76 1.25,4.85 1.73,4.08 2.40,3.52 3.19,3.22 4.01,3.22 4.80,3.52"/></g></pattern></defs>
<g clip-path="url(#vpclip)">
<path d="M177.5,207.4 177.3,201.6 176.8,196.1 175.9,190.9 174.7,185.9 173.1,181.3 171.2,177 169,173 166.5,169.4 163.6,166.2 160.5,163.4 157.1,161 153.5,159.1 149.6,157.5 145.6,156.5 141.3,155.9 136.8,155.7 132.2,156 127.4,156.7 122.6,157.9 117.6,159.6 112.6,161.6 107.6,164.1 102.5,167.1 97.5,170.4 92.5,174.1 87.6,178.1 82.7,182.6 77.9,187.3 73.3,192.3 68.9,197.7 64.6,203.2 60.5,209 56.6,215 53,221.1 49.6,227.4 46.5,233.8 43.7,240.3 41.1,246.8 38.9,253.3 37,259.8 35.5,266.3 34.3,272.7 33.4,278.9 32.8,285 32.7,290.9 32.8,296.7 33.4,302.2 34.3,307.4 35.5,312.4 37,317 38.9,321.3 41.1,325.3 43.7,328.9 46.5,332.1 49.6,334.9 53,337.3 56.6,339.2 60.5,340.8 64.6,341.8 68.9,342.4 73.3,342.6 77.9,342.3 82.7,341.6 87.6,340.4 92.5,338.7 97.5,336.7 102.5,334.2 107.6,331.2 112.6,327.9 117.6,324.2 122.6,320.2 127.4,315.7 132.2,311 136.8,306 141.3,300.6 145.6,295.1 149.6,289.3 153.5,283.3 157.1,277.2 160.5,270.9 163.6,264.5 166.5,258 169,251.5 171.2,245 173.1,238.5 174.7,232 175.9,225.6 176.8,219.4 177.3,213.3Z" fill="#e8e6c8" stroke="#fafaf4" stroke-width="1.2"/>
<path d="M178.6,208 178.4,202.2 177.8,196.7 177,191.5 175.7,186.6 174.2,181.9 172.3,177.6 170.1,173.6 167.6,170 164.7,166.8 161.6,164 158.2,161.6 154.6,159.7 150.7,158.2 146.6,157.1 142.4,156.5 137.9,156.3 133.3,156.6 128.5,157.3 123.7,158.5 118.7,160.2 113.7,162.3 108.7,164.8 103.6,167.7 98.6,171 93.6,174.7 88.6,178.8 83.8,183.2 79,187.9 74.4,193 70,198.3 65.7,203.8 61.6,209.6 57.7,215.6 54.1,221.8 50.7,228.1 47.6,234.5 44.8,240.9 42.2,247.4 40,254 38.1,260.5 36.6,266.9 35.3,273.3 34.5,279.5 33.9,285.6 33.8,291.6 33.9,297.3 34.5,302.8 35.3,308 36.6,313 38.1,317.6 40,322 42.2,325.9 44.8,329.5 47.6,332.7 50.7,335.5 54.1,337.9 57.7,339.9 61.6,341.4 65.7,342.5 70,343.1 74.4,343.2 79,342.9 83.8,342.2 88.6,341 93.6,339.4 98.6,337.3 103.6,334.8 108.7,331.9 113.7,328.5 118.7,324.8 123.7,320.8 128.5,316.4 133.3,311.6 137.9,306.6 142.4,301.3 146.6,295.7 150.7,289.9 154.6,283.9 158.2,277.8 161.6,271.5 164.7,265.1 167.6,258.6 170.1,252.1 172.3,245.6 174.2,239.1 175.7,232.6 177,226.3 177.8,220 178.4,213.9Z" fill="#ecebd8" stroke="#f6f6f0" stroke-width="0.6"/>
<path d="M179.6,208.6 179.5,202.9 178.9,197.4 178.1,192.1 176.8,187.2 175.3,182.5 173.4,178.2 171.2,174.2 168.6,170.7 165.8,167.4 162.7,164.6 159.3,162.3 155.7,160.3 151.8,158.8 147.7,157.7 143.4,157.1 139,156.9 134.4,157.2 129.6,158 124.8,159.2 119.8,160.8 114.8,162.9 109.8,165.4 104.7,168.3 99.7,171.6 94.7,175.3 89.7,179.4 84.9,183.8 80.1,188.5 75.5,193.6 71,198.9 66.7,204.5 62.7,210.3 58.8,216.2 55.2,222.4 51.8,228.7 48.7,235.1 45.8,241.5 43.3,248.1 41.1,254.6 39.2,261.1 37.6,267.5 36.4,273.9 35.5,280.2 35,286.3 34.8,292.2 35,297.9 35.5,303.4 36.4,308.7 37.6,313.6 39.2,318.3 41.1,322.6 43.3,326.6 45.8,330.1 48.7,333.4 51.8,336.2 55.2,338.5 58.8,340.5 62.7,342 66.7,343.1 71,343.7 75.5,343.9 80.1,343.6 84.9,342.8 89.7,341.6 94.7,340 99.7,337.9 104.7,335.4 109.8,332.5 114.8,329.2 119.8,325.5 124.8,321.4 129.6,317 134.4,312.3 139,307.2 143.4,301.9 147.7,296.3 151.8,290.5 155.7,284.6 159.3,278.4 162.7,272.1 165.8,265.7 168.6,259.3 171.2,252.7 173.4,246.2 175.3,239.7 176.8,233.3 178.1,226.9 178.9,220.6 179.5,214.5Z" fill="#ecebd8" stroke="#f6f6f0" stroke-width="0.6"/>
<path d="M180.7,209.2 180.5,203.5 180,198 179.1,192.8 177.9,187.8 176.4,183.2 174.5,178.8 172.2,174.9 169.7,171.3 166.9,168.1 163.8,165.3 160.4,162.9 156.8,160.9 152.9,159.4 148.8,158.3 144.5,157.7 140.1,157.6 135.4,157.9 130.7,158.6 125.8,159.8 120.9,161.4 115.9,163.5 110.8,166 105.8,168.9 100.7,172.3 95.7,176 90.8,180 85.9,184.4 81.2,189.2 76.6,194.2 72.1,199.5 67.8,205.1 63.7,210.9 59.9,216.9 56.2,223 52.9,229.3 49.7,235.7 46.9,242.2 44.4,248.7 42.2,255.2 40.3,261.7 38.7,268.2 37.5,274.5 36.6,280.8 36.1,286.9 35.9,292.8 36.1,298.6 36.6,304.1 37.5,309.3 38.7,314.2 40.3,318.9 42.2,323.2 44.4,327.2 46.9,330.8 49.7,334 52.9,336.8 56.2,339.2 59.9,341.1 63.7,342.6 67.8,343.7 72.1,344.3 76.6,344.5 81.2,344.2 85.9,343.5 90.8,342.3 95.7,340.6 100.7,338.5 105.8,336 110.8,333.1 115.9,329.8 120.9,326.1 125.8,322 130.7,317.6 135.4,312.9 140.1,307.8 144.5,302.5 148.8,297 152.9,291.2 156.8,285.2 160.4,279 163.8,272.7 166.9,266.3 169.7,259.9 172.2,253.4 174.5,246.8 176.4,240.3 177.9,233.9 179.1,227.5 180,221.3 180.5,215.2Z" fill="#ecebd8" stroke="#f6f6f0" stroke-width="0.6"/>
<path d="M181.8,209.9 181.6,204.1 181.1,198.6 180.2,193.4 179,188.4 177.4,183.8 175.5,179.5 173.3,175.5 170.8,171.9 168,168.7 164.9,165.9 161.5,163.5 157.8,161.6 154,160 149.9,159 145.6,158.4 141.1,158.2 136.5,158.5 131.8,159.2 126.9,160.4 122,162.1 117,164.1 111.9,166.6 106.9,169.6 101.8,172.9 96.8,176.6 91.9,180.6 87,185.1 82.3,189.8 77.7,194.8 73.2,200.2 68.9,205.7 64.8,211.5 61,217.5 57.3,223.6 53.9,229.9 50.8,236.3 48,242.8 45.5,249.3 43.3,255.8 41.4,262.3 39.8,268.8 38.6,275.2 37.7,281.4 37.2,287.5 37,293.4 37.2,299.2 37.7,304.7 38.6,309.9 39.8,314.9 41.4,319.5 43.3,323.8 45.5,327.8 48,331.4 50.8,334.6 53.9,337.4 57.3,339.8 61,341.7 64.8,343.3 68.9,344.3 73.2,344.9 77.7,345.1 82.3,344.8 87,344.1 91.9,342.9 96.8,341.2 101.8,339.2 106.9,336.7 111.9,333.7 117,330.4 122,326.7 126.9,322.7 131.8,318.2 136.5,313.5 141.1,308.5 145.6,303.1 149.9,297.6 154,291.8 157.8,285.8 161.5,279.7 164.9,273.4 168,267 170.8,260.5 173.3,254 175.5,247.5 177.4,241 179,234.5 180.2,228.1 181.1,221.9 181.6,215.8Z" fill="#dcdaf0" stroke="#ffffff" stroke-width="1"/>
<path d="M180.8,210.4 180.6,204.8 180.1,199.4 179.2,194.2 178,189.3 176.5,184.8 174.6,180.5 172.4,176.6 169.9,173 167.1,169.9 164.1,167.1 160.7,164.8 157.1,162.8 153.3,161.4 149.3,160.3 145.1,159.7 140.7,159.5 136.1,159.8 131.5,160.6 126.7,161.7 121.8,163.3 116.9,165.4 111.9,167.9 106.9,170.7 101.9,174 97,177.7 92.1,181.7 87.3,186 82.7,190.7 78.1,195.7 73.7,200.9 69.5,206.4 65.5,212.1 61.7,218 58.1,224 54.7,230.2 51.7,236.5 48.9,242.9 46.4,249.3 44.2,255.8 42.3,262.2 40.8,268.5 39.6,274.8 38.7,281 38.2,287 38,292.9 38.2,298.5 38.7,303.9 39.6,309.1 40.8,314 42.3,318.5 44.2,322.8 46.4,326.7 48.9,330.3 51.7,333.4 54.7,336.2 58.1,338.5 61.7,340.5 65.5,341.9 69.5,343 73.7,343.6 78.1,343.8 82.7,343.5 87.3,342.7 92.1,341.6 97,340 101.9,337.9 106.9,335.4 111.9,332.6 116.9,329.3 121.8,325.6 126.7,321.6 131.5,317.3 136.1,312.6 140.7,307.6 145.1,302.4 149.3,296.9 153.3,291.2 157.1,285.3 160.7,279.3 164.1,273.1 167.1,266.8 169.9,260.4 172.4,254 174.6,247.5 176.5,241.1 178,234.8 179.2,228.5 180.1,222.3 180.6,216.3Z" fill="#7270c6" stroke="#e4e0fa" stroke-width="1.2"/>
<path d="M174.1,208.3 174,206.5 172.9,199.4 171.2,192.8 168.7,186.9 165.7,181.7 161.9,177.2 157.7,173.6 152.9,170.8 147.8,169 71,213.3 65.9,221 61.1,229.3 56.9,237.9 53.1,246.6 50.1,255.4 47.6,264.1 45.9,272.7 44.8,281.1 44.7,283Z" fill="url(#holesD)"/>
<path d="M174.2,218.3 44.6,293 44.8,296.8 45.9,303.9 47.6,310.5 50.1,316.4 53.1,321.6 56.9,326.1 61.1,329.7 65.9,332.5 68.9,333.5 149.9,286.8 152.9,282.3 157.7,274 161.9,265.4 165.7,256.7 168.7,247.9 171.2,239.2 172.9,230.6 174,222.2Z" fill="url(#holesD)"/>
<g stroke="#5ee8c2" stroke-width="3.8" stroke-linecap="round"><line x1="109.4" y1="173.7" x2="214.2" y2="234.1"/><line x1="167.9" y1="178.9" x2="272.7" y2="239.4"/><line x1="50.9" y1="246.4" x2="155.7" y2="306.9"/><line x1="167.9" y1="256.9" x2="272.7" y2="317.4"/><line x1="50.9" y1="324.4" x2="155.7" y2="384.9"/><line x1="109.4" y1="329.6" x2="214.2" y2="390.1"/></g>
<path d="M281.7,270.6 281.5,265.1 281,259.8 280.1,254.7 279,250 277.4,245.5 275.6,241.3 273.5,237.5 271.1,234.1 268.3,231 265.3,228.3 262.1,226 258.6,224.1 254.9,222.6 250.9,221.6 246.8,221 242.5,220.9 238.1,221.1 233.5,221.9 228.8,223 224,224.6 219.2,226.6 214.4,229 209.5,231.8 206.7,233.6 206.7,394.1 209.5,392.7 214.4,389.9 219.2,386.7 224,383.1 228.8,379.2 233.5,375 238.1,370.4 242.5,365.6 246.8,360.4 250.9,355.1 254.9,349.5 258.6,343.7 262.1,337.8 265.3,331.8 268.3,325.6 271.1,319.4 273.5,313.1 275.6,306.8 277.4,300.6 279,294.3 280.1,288.2 281,282.2 281.5,276.3Z" fill="#f0d0f8" stroke="#ffffff" stroke-width="0.8"/>
<path d="M282.8,271.2 282.6,265.7 282.1,260.4 281.3,255.4 280.1,250.6 278.6,246.1 276.8,242 274.6,238.2 272.2,234.7 269.5,231.6 266.5,228.9 263.2,226.6 259.7,224.7 256,223.3 252,222.3 247.9,221.7 243.6,221.5 239.2,221.8 234.6,222.5 229.9,223.7 225.2,225.2 220.4,227.2 215.5,229.6 210.6,232.5 207.9,234.3 207.9,394.7 210.6,393.4 215.5,390.5 220.4,387.4 225.2,383.8 229.9,379.9 234.6,375.6 239.2,371.1 243.6,366.2 247.9,361.1 252,355.7 256,350.2 259.7,344.4 263.2,338.5 266.5,332.4 269.5,326.3 272.2,320 274.6,313.8 276.8,307.5 278.6,301.2 280.1,295 281.3,288.9 282.1,282.8 282.6,277Z" fill="#f0d0f8" stroke="#ffffff" stroke-width="0.8"/>
<path d="M283.9,271.9 283.7,266.4 283.2,261.1 282.4,256 281.2,251.3 279.7,246.8 277.9,242.6 275.7,238.8 273.3,235.4 270.6,232.3 267.6,229.6 264.3,227.3 260.8,225.4 257.1,223.9 253.2,222.9 249,222.3 244.8,222.2 240.3,222.4 235.7,223.2 231.1,224.3 226.3,225.9 221.5,227.9 216.6,230.3 211.8,233.1 209,234.9 209,395.4 211.8,394 216.6,391.2 221.5,388 226.3,384.4 231.1,380.5 235.7,376.3 240.3,371.7 244.8,366.9 249,361.7 253.2,356.4 257.1,350.8 260.8,345 264.3,339.1 267.6,333.1 270.6,326.9 273.3,320.7 275.7,314.4 277.9,308.1 279.7,301.9 281.2,295.6 282.4,289.5 283.2,283.5 283.7,277.6Z" fill="#8a2cd0" stroke="#f4c8f8" stroke-width="1"/>
<path d="M210.3,306.1 280.5,265.6 279.4,258.5 277.6,251.7 275.1,245.7 271.9,240.3 268.1,235.7 263.7,232 258.8,229.2 253.4,227.2 252,227 210.3,251.1Z" fill="url(#holesB)"/>
<path d="M280.7,277.4 210.3,318.1 210.3,373.1 257.2,346 258.8,343.6 263.7,335.1 268.1,326.3 271.9,317.3 275.1,308.3 277.6,299.3 279.4,290.5 280.5,281.9Z" fill="url(#holesB)"/>
<g stroke="#5ee8c2" stroke-width="3.8" stroke-linecap="round"><line x1="214.2" y1="234.1" x2="322.4" y2="296.6"/><line x1="272.7" y1="239.4" x2="380.9" y2="301.8"/><line x1="155.7" y1="306.9" x2="263.9" y2="369.4"/><line x1="272.7" y1="317.4" x2="380.9" y2="379.8"/><line x1="155.7" y1="384.9" x2="263.9" y2="447.4"/><line x1="214.2" y1="390.1" x2="322.4" y2="452.6"/></g>
<path d="M326.6,288.4 322.6,290.4 317.6,293.3 312.7,296.5 307.8,300.1 303,304.1 298.3,308.4 293.7,313 289.2,317.9 284.8,323.1 280.6,328.5 276.6,334.2 272.9,340 269.3,346 266,352.1 263,358.4 260.2,364.7 257.8,371 255.6,377.4 253.8,383.7 252.3,390 251.1,396.2 250.2,402.3 249.7,408.3 249.5,414.1 249.7,419.6 250.2,425 251.1,430.1 252.3,434.9 253.8,439.5 255.6,443.7 257.8,447.5 260.2,451 263,454.2 266,456.9 269.3,459.2 272.9,461.1 276.6,462.6 280.6,463.7 284.8,464.3 289.2,464.4 293.7,464.1 298.3,463.4 303,462.2 307.8,460.6 312.7,458.6 317.6,456.2 322.6,453.3 326.6,450.7Z" fill="#f0d0f8" stroke="#ffffff" stroke-width="0.8"/>
<path d="M327.7,289.1 323.7,291.1 318.8,293.9 313.9,297.2 309,300.8 304.2,304.7 299.4,309 294.8,313.6 290.3,318.6 285.9,323.7 281.8,329.2 277.8,334.8 274,340.7 270.5,346.6 267.2,352.8 264.1,359 261.4,365.3 258.9,371.7 256.8,378 254.9,384.4 253.4,390.7 252.2,396.9 251.3,403 250.8,408.9 250.6,414.7 250.8,420.3 251.3,425.6 252.2,430.8 253.4,435.6 254.9,440.1 256.8,444.3 258.9,448.2 261.4,451.7 264.1,454.8 267.2,457.6 270.5,459.9 274,461.8 277.8,463.3 281.8,464.3 285.9,464.9 290.3,465.1 294.8,464.8 299.4,464.1 304.2,462.9 309,461.3 313.9,459.3 318.8,456.8 323.7,454 327.7,451.3Z" fill="#f0d0f8" stroke="#ffffff" stroke-width="0.8"/>
<path d="M328.9,289.7 324.8,291.7 319.9,294.6 315,297.8 310.1,301.4 305.3,305.4 300.5,309.7 295.9,314.3 291.4,319.2 287.1,324.4 282.9,329.8 278.9,335.5 275.1,341.3 271.6,347.3 268.3,353.4 265.3,359.7 262.5,366 260,372.3 257.9,378.7 256,385 254.5,391.3 253.3,397.5 252.5,403.6 251.9,409.6 251.8,415.4 251.9,420.9 252.5,426.3 253.3,431.4 254.5,436.2 256,440.8 257.9,445 260,448.8 262.5,452.3 265.3,455.5 268.3,458.2 271.6,460.5 275.1,462.4 278.9,463.9 282.9,465 287.1,465.6 291.4,465.7 295.9,465.4 300.5,464.7 305.3,463.5 310.1,461.9 315,459.9 319.9,457.5 324.8,454.6 328.9,452Z" fill="#8a2cd0" stroke="#f4c8f8" stroke-width="1"/>
<path d="M327.6,368.5 327.6,313.5 277.3,342.5 277.2,342.7 272.2,351.4 267.7,360.3 263.9,369.4 260.6,378.5 258.1,387.6 256.3,396.5 255.2,405.2 254.9,410.4Z" fill="url(#holesB)"/>
<path d="M327.6,380.5 255.3,422.2 256.3,429 258.1,435.8 260.6,442 263.9,447.4 267.7,452 272.2,455.8 277.2,458.7 282.7,460.6 283.7,460.8 327.6,435.5Z" fill="url(#holesB)"/>
<g stroke="#5ee8c2" stroke-width="3.8" stroke-linecap="round"><line x1="322.4" y1="296.6" x2="430.7" y2="359.1"/><line x1="380.9" y1="301.8" x2="489.2" y2="364.4"/><line x1="263.9" y1="369.4" x2="372.2" y2="431.9"/><line x1="380.9" y1="379.8" x2="489.2" y2="442.4"/><line x1="263.9" y1="447.4" x2="372.2" y2="509.9"/><line x1="322.4" y1="452.6" x2="430.7" y2="515.1"/></g>
<path d="M498.2,395.6 498,390.1 497.5,384.8 496.6,379.7 495.5,375 494,370.5 492.1,366.3 490,362.5 487.6,359.1 484.8,356 481.8,353.3 478.6,351 475.1,349.1 471.4,347.6 467.4,346.6 463.3,346 459,345.9 454.6,346.1 450,346.9 445.3,348 440.5,349.6 435.7,351.6 430.9,354 426,356.8 423.2,358.6 423.2,519.1 426,517.7 430.9,514.9 435.7,511.7 440.5,508.1 445.3,504.2 450,500 454.6,495.4 459,490.6 463.3,485.4 467.4,480.1 471.4,474.5 475.1,468.7 478.6,462.8 481.8,456.8 484.8,450.6 487.6,444.4 490,438.1 492.1,431.8 494,425.6 495.5,419.3 496.6,413.2 497.5,407.2 498,401.3Z" fill="#f0d0f8" stroke="#ffffff" stroke-width="0.8"/>
<path d="M499.3,396.2 499.1,390.7 498.6,385.4 497.8,380.4 496.6,375.6 495.1,371.1 493.3,367 491.1,363.2 488.7,359.7 486,356.6 483,353.9 479.7,351.6 476.2,349.7 472.5,348.3 468.6,347.3 464.4,346.7 460.1,346.5 455.7,346.8 451.1,347.5 446.4,348.7 441.7,350.2 436.9,352.2 432,354.6 427.1,357.5 424.4,359.3 424.4,519.7 427.1,518.4 432,515.5 436.9,512.4 441.7,508.8 446.4,504.9 451.1,500.6 455.7,496.1 460.1,491.2 464.4,486.1 468.6,480.7 472.5,475.2 476.2,469.4 479.7,463.5 483,457.4 486,451.3 488.7,445 491.1,438.8 493.3,432.5 495.1,426.2 496.6,420 497.8,413.9 498.6,407.8 499.1,402Z" fill="#f0d0f8" stroke="#ffffff" stroke-width="0.8"/>
<path d="M500.4,396.9 500.2,391.4 499.7,386.1 498.9,381 497.7,376.3 496.2,371.8 494.4,367.6 492.3,363.8 489.8,360.4 487.1,357.3 484.1,354.6 480.8,352.3 477.3,350.4 473.6,348.9 469.7,347.9 465.6,347.3 461.3,347.2 456.8,347.4 452.2,348.2 447.6,349.3 442.8,350.9 438,352.9 433.1,355.3 428.3,358.1 425.5,359.9 425.5,520.4 428.3,519 433.1,516.2 438,513 442.8,509.4 447.6,505.5 452.2,501.3 456.8,496.7 461.3,491.9 465.6,486.7 469.7,481.4 473.6,475.8 477.3,470 480.8,464.1 484.1,458.1 487.1,451.9 489.8,445.7 492.3,439.4 494.4,433.1 496.2,426.9 497.7,420.6 498.9,414.5 499.7,408.5 500.2,402.6Z" fill="#8a2cd0" stroke="#f4c8f8" stroke-width="1"/>
<path d="M426.8,431.1 497,390.6 495.9,383.5 494.1,376.7 491.6,370.7 488.4,365.3 484.6,360.7 480.3,357 475.3,354.2 469.9,352.2 468.6,352 426.8,376.1Z" fill="url(#holesB)"/>
<path d="M497.2,402.4 426.8,443.1 426.8,498.1 473.7,471 475.3,468.6 480.3,460.1 484.6,451.3 488.4,442.3 491.6,433.3 494.1,424.3 495.9,415.5 497,406.9Z" fill="url(#holesB)"/>
<g stroke="#5ee8c2" stroke-width="3.8" stroke-linecap="round"><line x1="430.7" y1="359.1" x2="538.7" y2="421.5"/><line x1="489.2" y1="364.4" x2="597.2" y2="426.7"/><line x1="372.2" y1="431.9" x2="480.2" y2="494.3"/><line x1="489.2" y1="442.4" x2="597.2" y2="504.7"/><line x1="372.2" y1="509.9" x2="480.2" y2="572.3"/><line x1="430.7" y1="515.1" x2="538.7" y2="577.5"/></g>
<path d="M543.4,413.1 538.9,415.3 534,418.2 529.1,421.4 524.2,425 519.4,429 514.6,433.3 510,437.9 505.5,442.8 501.1,448 497,453.4 493,459.1 489.2,464.9 485.7,470.9 482.4,477 479.3,483.3 476.6,489.6 474.1,495.9 472,502.3 470.1,508.6 468.6,514.9 467.4,521.1 466.5,527.2 466,533.2 465.9,539 466,544.5 466.5,549.9 467.4,555 468.6,559.8 470.1,564.4 472,568.6 474.1,572.4 476.6,575.9 479.3,579.1 482.4,581.8 485.7,584.1 489.2,586 493,587.5 497,588.6 501.1,589.2 505.5,589.3 510,589 514.6,588.3 519.4,587.1 524.2,585.5 529.1,583.5 534,581.1 538.9,578.2 543.4,575.3Z" fill="#f0d0f8" stroke="#ffffff" stroke-width="0.8"/>
<path d="M544.5,413.8 540,416 535.1,418.8 530.2,422.1 525.3,425.7 520.5,429.6 515.8,433.9 511.1,438.5 506.6,443.5 502.3,448.6 498.1,454.1 494.1,459.7 490.3,465.6 486.8,471.5 483.5,477.7 480.5,483.9 477.7,490.2 475.2,496.6 473.1,502.9 471.2,509.3 469.7,515.6 468.5,521.8 467.7,527.9 467.2,533.8 467,539.6 467.2,545.2 467.7,550.5 468.5,555.7 469.7,560.5 471.2,565 473.1,569.2 475.2,573.1 477.7,576.6 480.5,579.7 483.5,582.5 486.8,584.8 490.3,586.7 494.1,588.2 498.1,589.2 502.3,589.8 506.6,590 511.1,589.7 515.8,589 520.5,587.8 525.3,586.2 530.2,584.2 535.1,581.7 540,578.9 544.5,575.9Z" fill="#f0d0f8" stroke="#ffffff" stroke-width="0.8"/>
<path d="M545.6,414.4 541.2,416.6 536.2,419.5 531.3,422.7 526.4,426.3 521.6,430.3 516.9,434.6 512.2,439.2 507.7,444.1 503.4,449.3 499.2,454.7 495.2,460.4 491.5,466.2 487.9,472.2 484.6,478.3 481.6,484.6 478.8,490.9 476.4,497.2 474.2,503.6 472.4,509.9 470.8,516.2 469.7,522.4 468.8,528.5 468.3,534.5 468.1,540.2 468.3,545.8 468.8,551.2 469.7,556.3 470.8,561.1 472.4,565.7 474.2,569.9 476.4,573.7 478.8,577.2 481.6,580.4 484.6,583.1 487.9,585.4 491.5,587.3 495.2,588.8 499.2,589.9 503.4,590.5 507.7,590.6 512.2,590.3 516.9,589.6 521.6,588.4 526.4,586.8 531.3,584.8 536.2,582.4 541.2,579.5 545.6,576.6Z" fill="#8a2cd0" stroke="#f4c8f8" stroke-width="1"/>
<path d="M544.3,494.1 544.3,439.1 492.8,468.8 488.5,476.3 484,485.2 480.2,494.3 477,503.4 474.4,512.5 472.6,521.4 471.5,530.1 471.2,536.2Z" fill="url(#holesB)"/>
<path d="M544.3,506.1 471.7,548 472.6,553.9 474.4,560.7 477,566.9 480.2,572.3 484,576.9 488.5,580.7 493.5,583.6 499,585.5 501.2,585.9 544.3,561Z" fill="url(#holesB)"/>
<g stroke="#5ee8c2" stroke-width="3.8" stroke-linecap="round"><line x1="538.7" y1="421.5" x2="641.1" y2="480.6"/><line x1="597.2" y1="426.7" x2="699.6" y2="485.9"/><line x1="480.2" y1="494.3" x2="582.6" y2="553.4"/><line x1="597.2" y1="504.7" x2="699.6" y2="563.9"/><line x1="480.2" y1="572.3" x2="582.6" y2="631.4"/><line x1="538.7" y1="577.5" x2="641.1" y2="636.6"/></g>
<path d="M713.5,516.9 713.4,511.1 712.8,505.6 712,500.4 710.7,495.4 709.2,490.8 707.3,486.5 705.1,482.5 702.5,478.9 699.7,475.7 696.6,472.9 693.2,470.5 689.6,468.6 685.7,467 681.6,466 677.3,465.4 672.9,465.2 668.3,465.5 663.5,466.2 658.7,467.4 653.7,469.1 648.7,471.1 643.7,473.6 638.6,476.6 633.6,479.9 628.6,483.6 623.6,487.6 618.8,492.1 614,496.8 609.4,501.8 604.9,507.2 600.7,512.7 596.6,518.5 592.7,524.5 589.1,530.6 585.7,536.9 582.6,543.3 579.7,549.8 577.2,556.3 575,562.8 573.1,569.3 571.5,575.8 570.3,582.2 569.4,588.4 568.9,594.5 568.7,600.4 568.9,606.2 569.4,611.7 570.3,616.9 571.5,621.9 573.1,626.5 575,630.8 577.2,634.8 579.7,638.4 582.6,641.6 585.7,644.4 589.1,646.8 592.7,648.7 596.6,650.3 600.7,651.3 604.9,651.9 609.4,652.1 614,651.8 618.8,651.1 623.6,649.9 628.6,648.2 633.6,646.2 638.6,643.7 643.7,640.7 648.7,637.4 653.7,633.7 658.7,629.7 663.5,625.2 668.3,620.5 672.9,615.5 677.3,610.1 681.6,604.6 685.7,598.8 689.6,592.8 693.2,586.7 696.6,580.4 699.7,574 702.5,567.5 705.1,561 707.3,554.5 709.2,548 710.7,541.5 712,535.1 712.8,528.9 713.4,522.8Z" fill="#e8e6c8" stroke="#fafaf4" stroke-width="1.2"/>
<path d="M714.6,517.5 714.4,511.7 713.9,506.2 713,501 711.8,496.1 710.3,491.4 708.4,487.1 706.1,483.1 703.6,479.5 700.8,476.3 697.7,473.5 694.3,471.1 690.7,469.2 686.8,467.7 682.7,466.6 678.4,466 674,465.8 669.3,466.1 664.6,466.8 659.7,468 654.8,469.7 649.8,471.8 644.7,474.3 639.7,477.2 634.7,480.5 629.7,484.2 624.7,488.3 619.8,492.7 615.1,497.4 610.5,502.5 606,507.8 601.7,513.3 597.6,519.1 593.8,525.1 590.1,531.3 586.8,537.6 583.6,544 580.8,550.4 578.3,556.9 576.1,563.5 574.2,570 572.6,576.4 571.4,582.8 570.5,589 570,595.1 569.8,601.1 570,606.8 570.5,612.3 571.4,617.5 572.6,622.5 574.2,627.1 576.1,631.5 578.3,635.4 580.8,639 583.6,642.2 586.8,645 590.1,647.4 593.8,649.4 597.6,650.9 601.7,652 606,652.6 610.5,652.7 615.1,652.4 619.8,651.7 624.7,650.5 629.7,648.9 634.7,646.8 639.7,644.3 644.7,641.4 649.8,638 654.8,634.3 659.7,630.3 664.6,625.9 669.3,621.1 674,616.1 678.4,610.8 682.7,605.2 686.8,599.4 690.7,593.4 694.3,587.3 697.7,581 700.8,574.6 703.6,568.1 706.1,561.6 708.4,555.1 710.3,548.6 711.8,542.1 713,535.8 713.9,529.5 714.4,523.4Z" fill="#ecebd8" stroke="#f6f6f0" stroke-width="0.6"/>
<path d="M715.7,518.1 715.5,512.4 715,506.9 714.1,501.6 712.9,496.7 711.3,492 709.4,487.7 707.2,483.7 704.7,480.2 701.9,476.9 698.8,474.1 695.4,471.8 691.7,469.8 687.9,468.3 683.8,467.2 679.5,466.6 675,466.4 670.4,466.7 665.7,467.5 660.8,468.7 655.9,470.3 650.9,472.4 645.8,474.9 640.8,477.8 635.7,481.1 630.7,484.8 625.8,488.9 620.9,493.3 616.2,498 611.6,503.1 607.1,508.4 602.8,514 598.7,519.8 594.9,525.7 591.2,531.9 587.8,538.2 584.7,544.6 581.9,551 579.4,557.6 577.2,564.1 575.3,570.6 573.7,577 572.5,583.4 571.6,589.7 571.1,595.8 570.9,601.7 571.1,607.4 571.6,612.9 572.5,618.2 573.7,623.1 575.3,627.8 577.2,632.1 579.4,636.1 581.9,639.6 584.7,642.9 587.8,645.7 591.2,648 594.9,650 598.7,651.5 602.8,652.6 607.1,653.2 611.6,653.4 616.2,653.1 620.9,652.3 625.8,651.1 630.7,649.5 635.7,647.4 640.8,644.9 645.8,642 650.9,638.7 655.9,635 660.8,630.9 665.7,626.5 670.4,621.8 675,616.7 679.5,611.4 683.8,605.8 687.9,600 691.7,594.1 695.4,587.9 698.8,581.6 701.9,575.2 704.7,568.8 707.2,562.2 709.4,555.7 711.3,549.2 712.9,542.8 714.1,536.4 715,530.1 715.5,524Z" fill="#ecebd8" stroke="#f6f6f0" stroke-width="0.6"/>
<path d="M716.8,518.7 716.6,513 716.1,507.5 715.2,502.3 714,497.3 712.4,492.7 710.5,488.3 708.3,484.4 705.8,480.8 703,477.6 699.8,474.8 696.5,472.4 692.8,470.4 689,468.9 684.9,467.8 680.6,467.2 676.1,467.1 671.5,467.4 666.8,468.1 661.9,469.3 657,470.9 652,473 646.9,475.5 641.9,478.4 636.8,481.8 631.8,485.5 626.9,489.5 622,493.9 617.3,498.7 612.6,503.7 608.2,509 603.9,514.6 599.8,520.4 595.9,526.4 592.3,532.5 588.9,538.8 585.8,545.2 583,551.7 580.5,558.2 578.2,564.7 576.4,571.2 574.8,577.7 573.6,584 572.7,590.3 572.2,596.4 572,602.3 572.2,608.1 572.7,613.6 573.6,618.8 574.8,623.7 576.4,628.4 578.2,632.7 580.5,636.7 583,640.3 585.8,643.5 588.9,646.3 592.3,648.7 595.9,650.6 599.8,652.1 603.9,653.2 608.2,653.8 612.6,654 617.3,653.7 622,653 626.9,651.8 631.8,650.1 636.8,648 641.9,645.5 646.9,642.6 652,639.3 657,635.6 661.9,631.5 666.8,627.1 671.5,622.4 676.1,617.3 680.6,612 684.9,606.5 689,600.7 692.8,594.7 696.5,588.5 699.8,582.2 703,575.8 705.8,569.4 708.3,562.9 710.5,556.3 712.4,549.8 714,543.4 715.2,537 716.1,530.8 716.6,524.7Z" fill="#ecebd8" stroke="#f6f6f0" stroke-width="0.6"/>
<path d="M717.9,519.4 717.7,513.6 717.2,508.1 716.3,502.9 715.1,497.9 713.5,493.3 711.6,489 709.4,485 706.9,481.4 704,478.2 700.9,475.4 697.5,473 693.9,471.1 690,469.5 686,468.5 681.7,467.9 677.2,467.7 672.6,468 667.8,468.7 663,469.9 658,471.6 653,473.6 648,476.1 642.9,479.1 637.9,482.4 632.9,486.1 628,490.1 623.1,494.6 618.3,499.3 613.7,504.3 609.3,509.7 605,515.2 600.9,521 597,527 593.4,533.1 590,539.4 586.9,545.8 584.1,552.3 581.5,558.8 579.3,565.3 577.4,571.8 575.9,578.3 574.7,584.7 573.8,590.9 573.2,597 573.1,602.9 573.2,608.7 573.8,614.2 574.7,619.4 575.9,624.4 577.4,629 579.3,633.3 581.5,637.3 584.1,640.9 586.9,644.1 590,646.9 593.4,649.3 597,651.2 600.9,652.8 605,653.8 609.3,654.4 613.7,654.6 618.3,654.3 623.1,653.6 628,652.4 632.9,650.7 637.9,648.7 642.9,646.2 648,643.2 653,639.9 658,636.2 663,632.2 667.8,627.7 672.6,623 677.2,618 681.7,612.6 686,607.1 690,601.3 693.9,595.3 697.5,589.2 700.9,582.9 704,576.5 706.9,570 709.4,563.5 711.6,557 713.5,550.5 715.1,544 716.3,537.6 717.2,531.4 717.7,525.3Z" fill="#dcdaf0" stroke="#ffffff" stroke-width="1"/>
<path d="M716.8,519.9 716.7,514.3 716.1,508.9 715.3,503.7 714.1,498.8 712.5,494.3 710.7,490 708.5,486.1 706,482.5 703.2,479.4 700.1,476.6 696.8,474.3 693.2,472.3 689.4,470.9 685.4,469.8 681.1,469.2 676.8,469 672.2,469.3 667.5,470.1 662.7,471.2 657.9,472.8 652.9,474.9 648,477.4 643,480.2 638,483.5 633.1,487.2 628.2,491.2 623.4,495.5 618.7,500.2 614.2,505.2 609.8,510.4 605.6,515.9 601.5,521.6 597.7,527.5 594.1,533.5 590.8,539.7 587.7,546 585,552.4 582.5,558.8 580.3,565.3 578.4,571.7 576.9,578 575.7,584.3 574.8,590.5 574.3,596.5 574.1,602.4 574.3,608 574.8,613.4 575.7,618.6 576.9,623.5 578.4,628 580.3,632.3 582.5,636.2 585,639.8 587.7,642.9 590.8,645.7 594.1,648 597.7,650 601.5,651.4 605.6,652.5 609.8,653.1 614.2,653.3 618.7,653 623.4,652.2 628.2,651.1 633.1,649.5 638,647.4 643,644.9 648,642.1 652.9,638.8 657.9,635.1 662.7,631.1 667.5,626.8 672.2,622.1 676.8,617.1 681.1,611.9 685.4,606.4 689.4,600.7 693.2,594.8 696.8,588.8 700.1,582.6 703.2,576.3 706,569.9 708.5,563.5 710.7,557 712.5,550.6 714.1,544.3 715.3,538 716.1,531.8 716.7,525.8Z" fill="#7270c6" stroke="#e4e0fa" stroke-width="1.2"/>
<path d="M710.1,517.8 710.1,516 709,508.9 707.2,502.3 704.8,496.4 701.7,491.2 698,486.7 693.7,483.1 688.9,480.3 683.8,478.5 607.1,522.8 602,530.5 597.2,538.8 592.9,547.4 589.2,556.1 586.1,564.9 583.7,573.6 581.9,582.2 580.9,590.6 580.8,592.5Z" fill="url(#holesD)"/>
<path d="M710.2,527.8 580.7,602.5 580.9,606.3 581.9,613.4 583.7,620 586.1,625.9 589.2,631.1 592.9,635.6 597.2,639.2 602,642 605,643 686,596.3 688.9,591.8 693.7,583.5 698,574.9 701.7,566.2 704.8,557.4 707.2,548.7 709,540.1 710.1,531.7Z" fill="url(#holesD)"/>
<circle cx="645.5" cy="483.1" r="1.3" fill="#e8e8f8"/>
<circle cx="704" cy="488.4" r="1.3" fill="#e8e8f8"/>
<circle cx="587" cy="555.9" r="1.3" fill="#e8e8f8"/>
<circle cx="704" cy="566.4" r="1.3" fill="#e8e8f8"/>
<circle cx="587" cy="633.9" r="1.3" fill="#e8e8f8"/>
<circle cx="645.5" cy="639.1" r="1.3" fill="#e8e8f8"/>
<g stroke="#2a2ad0" stroke-width="1.5" fill="none">
<line x1="648.9" y1="450" x2="648.9" y2="468"/>
<line x1="648.9" y1="652" x2="648.9" y2="676"/>
<line x1="549" y1="621.5" x2="574" y2="607"/>
<line x1="718" y1="524" x2="748" y2="506.5"/>
</g>
<g stroke="#4646ee" stroke-width="1.2" stroke-dasharray="12 2.5 2 2.5" fill="none">
<line x1="648.9" y1="468" x2="648.9" y2="652"/>
<line x1="574" y1="607" x2="718" y2="524"/>
</g>
<g fill="#c828e0" font-family="Liberation Sans" font-size="7" font-weight="bold">
<text transform="translate(646.5,444) rotate(-30)">0</text>
<text transform="translate(747,505) rotate(-30)">90</text>
<text transform="translate(537,627) rotate(-30)">270</text>
<text transform="translate(644,687) rotate(-30)">180</text>
</g>
<g stroke-width="1.6">
<line x1="34" y1="305" x2="34" y2="366" stroke="#2aa838"/>
<line x1="16" y1="353.6" x2="68.5" y2="324" stroke="#b02828"/>
<line x1="16" y1="334" x2="69.3" y2="363.2" stroke="#2424a0"/>
<rect x="31.5" y="341" width="5" height="5" fill="none" stroke="#c8b040" stroke-width="1.2"/>
</g>

</g>
<g>
<ellipse cx="705" cy="191" rx="42.25" ry="24.4" fill="#aeb1b4"/>
<ellipse cx="705" cy="190.3" rx="34" ry="18.3" fill="#232d3a"/>
<ellipse cx="705" cy="190.3" rx="32.5" ry="17" fill="none" stroke="#7a8086" stroke-width="1"/>
<g fill="#a6aaae" font-family="Liberation Sans" font-size="10" font-weight="bold" stroke="#202830" stroke-width="0.3">
<text transform="translate(666,210) rotate(22)">W</text>
<text transform="translate(733,206) rotate(-25)">S</text>
<text transform="translate(671,171) rotate(-20)">N</text>
<text transform="translate(731,167) rotate(25)">E</text>
</g>
<polygon points="705.4,143.5 728.6,156.2 704.6,168.2 680.7,155.4" fill="#c8c8c8" stroke="#8a8a8a" stroke-width="0.8"/>
<polygon points="680.7,155.4 704.6,168.2 705.4,197.4 682.2,182.4" fill="#bcbcbc" stroke="#8a8a8a" stroke-width="0.8"/>
<polygon points="704.6,168.2 728.6,156.2 727.8,181.6 705.4,197.4" fill="#c2c2c2" stroke="#8a8a8a" stroke-width="0.8"/>
<g fill="#4a4a4a" font-family="Liberation Sans" font-size="6.5" font-weight="bold">
<text transform="translate(713,153) rotate(200)">BACK</text>
<text transform="translate(690.5,171) rotate(88)">LEFT</text>
<text transform="translate(711.5,183) rotate(-22)">TOP</text>
</g>
<rect x="680.7" y="231" width="48" height="12" rx="2.5" fill="#a0a5aa" stroke="#b8bcc0" stroke-width="0.8"/>
<text x="683.5" y="240.3" font-family="Liberation Sans" font-size="7.2" fill="#5c6066">Unnamed</text>
<polygon points="716.5,236 722,236 719.25,239" fill="#c4c8cc"/>
</g>
</svg><svg class="a" style="left:0;top:0" width="1024" height="802" viewBox="0 0 1024 802">
<!-- top viewport window controls -->
<rect x="974" y="121.3" width="7.5" height="3" fill="#f4f4f4" stroke="#1a1e22" stroke-width="0.5"/>
<rect x="990.5" y="118" width="5" height="5" fill="none" stroke="#f4f4f4" stroke-width="1.1"/>
<rect x="988" y="120" width="5.5" height="5.5" fill="#2a2e32" stroke="#f4f4f4" stroke-width="1.4"/>
<g stroke="#f4f4f4" stroke-width="1.7"><line x1="1002.5" y1="118.5" x2="1008" y2="124.5"/><line x1="1008" y1="118.5" x2="1002.5" y2="124.5"/></g>
<!-- top view -->
<line x1="868.7" y1="303.2" x2="932.3" y2="303.2" stroke="#3434b8" stroke-width="1.5"/>
<g stroke="#34e4ec" stroke-width="1.6">
<line x1="882.4" y1="133" x2="882.4" y2="302"/>
<line x1="900.6" y1="133" x2="900.6" y2="302"/>
<line x1="919.1" y1="133" x2="919.1" y2="302"/>
</g>
<g stroke="#ffffff" stroke-width="3" stroke-linecap="round">
<line x1="878.5" y1="133" x2="923.5" y2="133"/>
<line x1="878.5" y1="301.5" x2="923.5" y2="301.5"/>
</g>
<g stroke="#c41cd4" stroke-width="1.8">
<line x1="897.4" y1="166.6" x2="922.3" y2="166.6"/>
<line x1="877.5" y1="200.5" x2="902.4" y2="200.5"/>
<line x1="897.4" y1="234.7" x2="922.3" y2="234.7"/>
<line x1="877.5" y1="268.9" x2="902.4" y2="268.9"/>
</g>
<!-- middle view -->
<line x1="777.4" y1="429" x2="777.4" y2="511.6" stroke="#3a3ab8" stroke-width="1.5"/>
<g stroke="#34e4ec" stroke-width="1.6">
<line x1="780" y1="443.3" x2="1001" y2="443.3"/>
<line x1="780" y1="457.7" x2="1001" y2="457.7"/>
<line x1="780" y1="485.5" x2="1001" y2="485.5"/>
<line x1="780" y1="499.6" x2="1001" y2="499.6"/>
</g>
<g stroke="#c41cd4" stroke-width="1.8">
<line x1="822.9" y1="443.5" x2="822.9" y2="499.5"/>
<line x1="868.4" y1="443.5" x2="868.4" y2="499.5"/>
<line x1="912.6" y1="443.5" x2="912.6" y2="499.5"/>
<line x1="957" y1="443.5" x2="957" y2="499.5"/>
</g>
<g fill="#ffffff" stroke="#cfcfcf" stroke-width="0.6">
<rect x="779" y="441.5" width="3" height="60" rx="1.2"/>
<rect x="999.7" y="441.5" width="3" height="60" rx="1.2"/>
</g>
<!-- bottom view -->
<g stroke="#3434b8" stroke-width="1.5">
<line x1="891.7" y1="606" x2="891.7" y2="767"/>
<line x1="805" y1="691" x2="977" y2="691"/>
</g>
<circle cx="891.7" cy="691.1" r="56.5" fill="none" stroke="#ffffff" stroke-width="1.4"/>
<circle cx="891.7" cy="691.1" r="54.3" fill="none" stroke="#a828c8" stroke-width="1.4"/>
<defs>
<pattern id="fronth" patternUnits="userSpaceOnUse" width="4.45" height="7.8" x="0" y="649">
<rect width="4.45" height="7.8" fill="#34383c"/>
<g fill="#dcdcdc" stroke="#ffffff" stroke-width="0.75"><circle cx="2.225" cy="1.950" r="1.85"/><circle cx="0.000" cy="5.850" r="1.85"/><circle cx="4.450" cy="5.850" r="1.85"/><circle cx="2.225" cy="-1.950" r="1.85"/><circle cx="0.000" cy="-1.950" r="1.85"/><circle cx="4.450" cy="-1.950" r="1.85"/><circle cx="2.225" cy="9.750" r="1.85"/></g>
</pattern>
<clipPath id="fhclip"><circle cx="891.7" cy="691.1" r="51"/></clipPath>
</defs>
<g clip-path="url(#fhclip)">
<rect x="835" y="649.2" width="114" height="39" fill="url(#fronth)"/>
<rect x="835" y="694" width="114" height="37.6" fill="url(#fronth)"/>
</g>
<rect x="887.2" y="636" width="9" height="111" fill="none" stroke="#a828c8" stroke-width="1.2"/>
<line x1="891.7" y1="636" x2="891.7" y2="747" stroke="#6868e8" stroke-width="1.2" stroke-dasharray="6 2 2 2"/>
<line x1="836" y1="691" x2="947" y2="691" stroke="#3434c0" stroke-width="1.8" stroke-dasharray="10 2 3 2"/>
<g fill="#b020d0">
<circle cx="891.7" cy="608.6" r="2.2"/>
<rect x="803" y="688.5" width="6" height="5"/>
<polygon points="971,691 975,688 978,691 975,694"/>
</g>
</svg>
</body></html>
